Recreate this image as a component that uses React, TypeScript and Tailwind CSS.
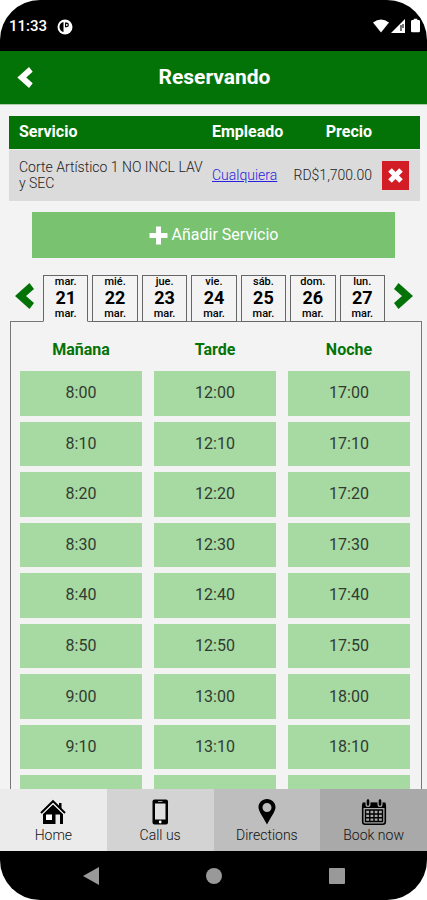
import React, { useState } from "react";

const days = [
  { weekday: "mar.", day: 21, month: "mar." },
  { weekday: "mié.", day: 22, month: "mar." },
  { weekday: "jue.", day: 23, month: "mar." },
  { weekday: "vie.", day: 24, month: "mar." },
  { weekday: "sáb.", day: 25, month: "mar." },
  { weekday: "dom.", day: 26, month: "mar." },
  { weekday: "lun.", day: 27, month: "mar." },
];

const minutes = ["00", "10", "20", "30", "40", "50"];

function slotsFrom(hour: number) {
  return Array.from({ length: 9 }, (_, i) => `${hour + Math.floor(i / 6)}:${minutes[i % 6]}`);
}

const periods = [
  { name: "Mañana", slots: slotsFrom(8) },
  { name: "Tarde", slots: slotsFrom(12) },
  { name: "Noche", slots: slotsFrom(17) },
];

function Chevron({ className, flip = false }: { className: string; flip?: boolean }) {
  return (
    <svg className={className} viewBox="0 0 19 26" fill="currentColor" aria-hidden="true">
      <path d={flip ? "M4.500 0 L19 13 L4.500 26 L0 20 L8 13 L0 6Z" : "M14.500 0 L0 13 L14.500 26 L19 20 L11 13 L19 6Z"} />
    </svg>
  );
}

function HomeIcon() {
  return (
    <svg width="26" height="26" viewBox="0 0 26 26" aria-hidden="true">
      <path d="M1 14 L13 2.200 L25 14" fill="none" stroke="#000" strokeWidth="2" />
      <path d="M19 4h2.500v6l-2.500-2.400z" />
      <path d="M13 5.500 L23 15 V25 H3 V15 Z" />
      <path d="M1 14 L13 2.200 L25 14" fill="none" stroke="#ebebeb" strokeWidth="1" transform="translate(0 2.300)" />
      <path d="M15.500 15.500h4.500V25h-4.500z" fill="#ebebeb" />
      <path d="M6 15.500h6V21H6z" fill="#fff" />
    </svg>
  );
}

function PhoneIcon() {
  return (
    <svg width="26" height="26" viewBox="0 0 26 26" aria-hidden="true">
      <rect x="5.500" y="0.500" width="15.500" height="25" rx="2" />
      <path d="M8 4.500h10.500V20.500H8z" fill="#e0e0e0" />
      <path d="M11 2.500h4.500" stroke="#999" strokeWidth="1" />
      <circle cx="13.200" cy="23" r="1.400" fill="#fff" />
    </svg>
  );
}

function PinIcon() {
  return (
    <svg width="26" height="26" viewBox="0 0 26 26" aria-hidden="true">
      <path fillRule="evenodd" d="M13 0C8 0 4.500 3.700 4.500 8.200C4.500 12 8.500 17 13 25.500C17.500 17 21.500 12 21.500 8.200C21.500 3.700 18 0 13 0Z M13 4a4.500 4.500 0 1 1 0 9a4.500 4.500 0 1 1 0-9Z" />
    </svg>
  );
}

function CalendarIcon() {
  return (
    <svg width="26" height="26" viewBox="0 0 26 26" aria-hidden="true">
      <rect x="1.700" y="4.500" width="22.600" height="20.700" rx="2.500" fill="none" stroke="#000" strokeWidth="1.600" />
      <path d="M1.500 3.500h23v5.500h-23z" />
      <path d="M7 1.500v4M19 1.500v4" stroke="#a9a9a9" strokeWidth="5" strokeLinecap="round" />
      <path d="M7 1.500v4M19 1.500v4" stroke="#000" strokeWidth="2.600" strokeLinecap="round" />
      <path d="M4.500 11h17v11.500h-17z M4.500 15h17 M4.500 18.800h17 M8.800 11v11.500 M13 11v11.500 M17.200 11v11.500" fill="none" stroke="#000" strokeWidth="1.400" />
    </svg>
  );
}

const navItems = [
  { label: "Home", color: "bg-[#ebebeb]", Icon: HomeIcon },
  { label: "Call us", color: "bg-[#d3d3d3]", Icon: PhoneIcon },
  { label: "Directions", color: "bg-[#bebebe]", Icon: PinIcon },
  { label: "Book now", color: "bg-[#a9a9a9]", Icon: CalendarIcon },
];

function StatusBar() {
  return (
    <div className="flex h-[51px] shrink-0 items-center justify-between bg-black pr-[7px] pl-[9px] text-white">
      <div className="flex items-center gap-[10px] pt-[2px]">
        <span className="text-[15px] font-medium">11:33</span>
        <svg width="16" height="16" viewBox="0 0 16 16" aria-hidden="true">
          <circle cx="8" cy="8" r="7.500" fill="#fff" />
          <path d="M6.500 13A5.200 5.200 0 0 1 5 3.500L6.500 3z" fill="#000" />
          <path d="M8 3.500h1.500a2.400 2.400 0 0 1 0 4.800H8z" fill="#000" />
          <circle cx="9.800" cy="6" r="0.900" fill="#fff" />
        </svg>
      </div>
      <div className="flex items-center gap-[2px]">
        <svg width="16" height="14" viewBox="0 0 16 14" fill="#fff" aria-hidden="true">
          <path d="M0 3.500Q8-2.500 16 3.500L8 13.500z" />
        </svg>
        <svg width="14" height="14" viewBox="0 0 14 14" aria-hidden="true">
          <path d="M14 0v14H0z" fill="#fff" />
          <path d="M10 6v6M12 5v4" stroke="#444" strokeWidth="1.500" />
        </svg>
        <span className="w-[2px]" />
        <svg width="9" height="15" viewBox="0 0 10 15" fill="#fff" aria-hidden="true">
          <path d="M3 0h4v1.500h1.500Q10 1.500 10 3v10.500Q10 15 8.500 15h-7Q0 15 0 13.500V3Q0 1.500 1.500 1.500H3z" />
        </svg>
      </div>
    </div>
  );
}

export default function App() {
  const [selected, setSelected] = useState(0);

  return (
    <div className="flex h-screen flex-col overflow-hidden rounded-[40px] bg-[#f3f3f3] font-['Roboto',sans-serif] text-[#333]">
      <StatusBar />

      <header className="grid h-[54px] shrink-0 grid-cols-[50px_1fr_48px] items-center border-b border-[#a9cda9] bg-[#047307] text-white">
        <button aria-label="Atrás" className="flex justify-center">
          <Chevron className="h-[21px] w-[16px]" />
        </button>
        <h1 className="text-center text-[21px] font-bold">Reservando</h1>
      </header>

      <main className="min-h-0 flex-1 overflow-y-auto pt-[11px] [scrollbar-width:none]">
        <div className="mr-[7px] ml-[9px]">
          <table className="w-full table-fixed border-collapse">
            <colgroup>
              <col />
              <col className="w-[72px]" />
              <col className="w-[88px]" />
              <col className="w-[48px]" />
            </colgroup>
            <thead>
              <tr className="h-[33px] bg-[#047307] text-[16px] text-white">
                <th className="pl-[10px] text-left font-bold">Servicio</th>
                <th className="text-left font-bold">Empleado</th>
                <th className="text-right font-bold">Precio</th>
                <td />
              </tr>
            </thead>
            <tbody>
              <tr className="h-[52px] border-t border-[#eee] bg-[#dbdbdb] text-[14px] leading-4 font-light text-[#222]">
                <td className="pr-2 pl-[10px]">Corte Artístico 1 NO INCL LAV y SEC</td>
                <td>
                  <a href="#empleado" className="text-[#2a20e0] underline">Cualquiera</a>
                </td>
                <td className="text-right">RD$1,700.00</td>
                <td className="pl-[10px]">
                  <button aria-label="Eliminar" className="flex h-[29px] w-[27px] items-center justify-center bg-[#d31d26]">
                    <svg width="15" height="15" viewBox="0 0 15 15" aria-hidden="true">
                      <path d="M2 2L13 13M13 2L2 13" stroke="#fff" strokeWidth="5" />
                    </svg>
                  </button>
                </td>
              </tr>
            </tbody>
          </table>
        </div>

        <button className="mx-auto mt-[11px] flex h-[46px] w-[85%] items-center justify-center gap-1 bg-[#78c270] text-[16px] text-white">
          <svg width="19" height="19" viewBox="0 0 19 19" aria-hidden="true">
            <path d="M9.500 0.500v18M0.500 9.500h18" stroke="#fff" strokeWidth="5" />
          </svg>
          Añadir Servicio
        </button>

        <div className="mr-[14px] ml-[15px] mt-[17px] flex items-start justify-between">
          <button aria-label="Días anteriores" className="pt-2 text-[#047307]">
            <Chevron className="h-[26px] w-[19px]" />
          </button>
          <div role="tablist" className="mx-[9px] -mb-px flex flex-1 gap-1">
            {days.map((d, i) => (
              <button
                key={d.day}
                role="tab"
                aria-selected={i === selected}
                onClick={() => setSelected(i)}
                className={`relative flex h-[47px] flex-1 flex-col items-center border border-[#666] text-[11px] leading-3 font-medium text-black ${i === selected ? "border-b-[#f3f3f3]" : ""}`}
              >
                <span>{d.weekday}</span>
                <span className="text-[18px] leading-5 font-bold">{d.day}</span>
                <span>{d.month}</span>
              </button>
            ))}
          </div>
          <button aria-label="Días siguientes" className="pt-2 text-[#047307]">
            <Chevron flip className="h-[26px] w-[19px]" />
          </button>
        </div>

        <div className="mr-[5px] ml-[10px] grid grid-cols-3 gap-3 border border-[#777] pt-[16px] pr-[11px] pl-[9px]">
          {periods.map((p) => (
            <section key={p.name}>
              <h2 className="text-center text-[16px] leading-6 font-bold text-[#047307]">{p.name}</h2>
              <div className="mt-[9px] grid h-[449px] auto-rows-fr gap-[6px]">
                {p.slots.map((s) => (
                  <button key={s} className="bg-[#a7d9a3] text-[16px] text-[#303c30]">
                    {s}
                  </button>
                ))}
              </div>
            </section>
          ))}
        </div>
      </main>

      <nav className="grid h-[62px] shrink-0 grid-cols-4">
        {navItems.map(({ label, color, Icon }) => (
          <a key={label} href="#nav" className={`flex flex-col items-center pt-[10px] text-[14px] leading-4 font-light text-[#111] ${color}`}>
            <Icon />
            <span className="mt-[2px]">{label}</span>
          </a>
        ))}
      </nav>

      <div className="flex h-[49px] shrink-0 items-center justify-center gap-[107px] bg-black text-[#999]">
        <button aria-label="Volver">
          <svg width="16" height="18" viewBox="0 0 16 18" fill="currentColor" aria-hidden="true">
            <path d="M16 0v18L0 9z" />
          </svg>
        </button>
        <button aria-label="Inicio">
          <svg width="16" height="16" viewBox="0 0 16 16" fill="currentColor" aria-hidden="true">
            <circle cx="8" cy="8" r="8" />
          </svg>
        </button>
        <button aria-label="Recientes">
          <svg width="16" height="16" viewBox="0 0 16 16" fill="currentColor" aria-hidden="true">
            <rect width="16" height="16" rx="1" />
          </svg>
        </button>
      </div>
    </div>
  );
}
